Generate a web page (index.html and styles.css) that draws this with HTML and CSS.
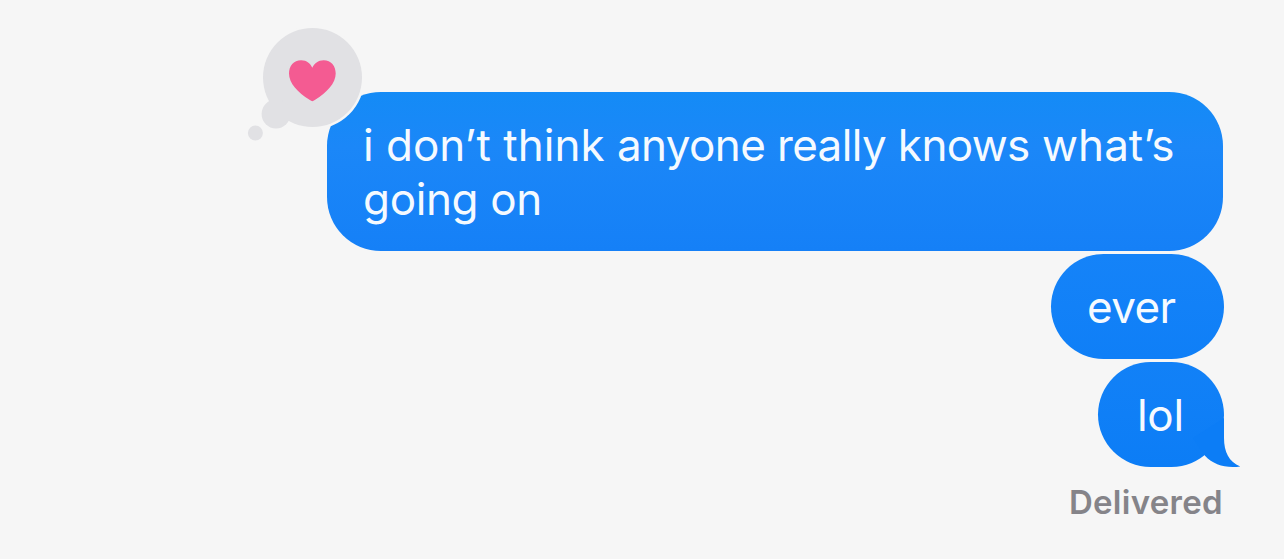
FILE: index.html
```
<!DOCTYPE html>
<html lang="en">
<head>
    <meta charset="UTF-8">
    <meta name="viewport" content="width=device-width, initial-scale=1.0">
    <title>Messages</title>
    <link rel="stylesheet" href="styles.css">
</head>
<body>
    <div class="conversation">
        <div class="bubble first">
            <span class="line">i don’t think <span class="tight">anyone really knows</span> what’s</span>
            <span class="line line-two">going on</span>
            <svg class="reaction" width="122" height="122" viewBox="0 0 122 122">
                <circle class="ring" cx="68.5" cy="53.5" r="52"/>
                <g class="cloud">
                    <circle cx="68.5" cy="53.5" r="49.5"/>
                    <circle cx="32" cy="90" r="14.4"/>
                    <circle cx="11.4" cy="109" r="7.5"/>
                </g>
                <path class="heart" d="M68.3 77.2C67.7 77.2 66.6 76.5 65.5 75.8C53.8 68.8 45 59.2 45 49.6C45 42 49.6 36.2 57.2 36.2C62.8 36.2 66.4 39.4 68.3 43.8C70.2 39.4 74.2 36.2 79.6 36.2C87.2 36.2 91.7 42 91.7 49.6C91.7 59.2 82.8 68.8 71.2 75.8C70 76.5 68.9 77.2 68.3 77.2Z"/>
            </svg>
        </div>
        <div class="bubble second"><span class="line">ever</span></div>
        <div class="bubble third">
            <span class="line">lol</span>
            <svg class="tail" width="48" height="50" viewBox="0 0 48 50">
                <path d="M31 0V20C31 34 36 44 47.3 48.5C33 50.5 20.5 47 12 37.8L0 20Z"/>
            </svg>
        </div>
        <div class="status">Delivered</div>
    </div>
</body>
</html>
```
FILE: styles.css
```
body {
    font-family: Inter, "Liberation Sans", sans-serif;
    background-color: #f6f6f6;
    margin: 0;
}

.conversation {
    display: flex;
    flex-direction: column;
    align-items: flex-end;
    gap: 3px;
    height: 559px;
    padding: 92px 60px 0 0;
    box-sizing: border-box;
    overflow: hidden;
}

/* Sent messages */
.bubble {
    position: relative;
    box-sizing: border-box;
    height: 105px;
    padding: 26px 36px;
    border-radius: 52.5px;
    color: #f5faff;
    font-size: 44px;
    line-height: 54px;
    white-space: nowrap;
}

.line {
    display: block;
}

.line-two {
    letter-spacing: -0.35px;
}

.tight {
    letter-spacing: -0.62px;
}

.first {
    width: 896px;
    height: 159px;
    margin-right: 1px;
    border-radius: 54px;
    background: linear-gradient(#148bf6, #1b87f8 35%, #1580f7);
}

.second {
    width: 173px;
    background: linear-gradient(#1583f8, #0f7ff7);
    letter-spacing: -0.6px;
}

.third {
    width: 126px;
    padding-left: 39px;
    background: linear-gradient(#1281f7, #0c7df6);
    letter-spacing: -0.3px;
}

/* Heart reaction over the corner */
.reaction {
    position: absolute;
    top: -68px;
    left: -83px;
}

.ring {
    fill: #f6f6f6;
}

.cloud {
    fill: #e1e1e4;
}

.heart {
    fill: #f45b92;
}

.tail {
    position: absolute;
    right: -17px;
    bottom: -1px;
    fill: #0c7df6;
}

.status {
    margin-top: 12px;
    margin-right: 1px;
    color: #858489;
    font-size: 33px;
    font-weight: 600;
    line-height: 40px;
    letter-spacing: 0.3px;
}
```
